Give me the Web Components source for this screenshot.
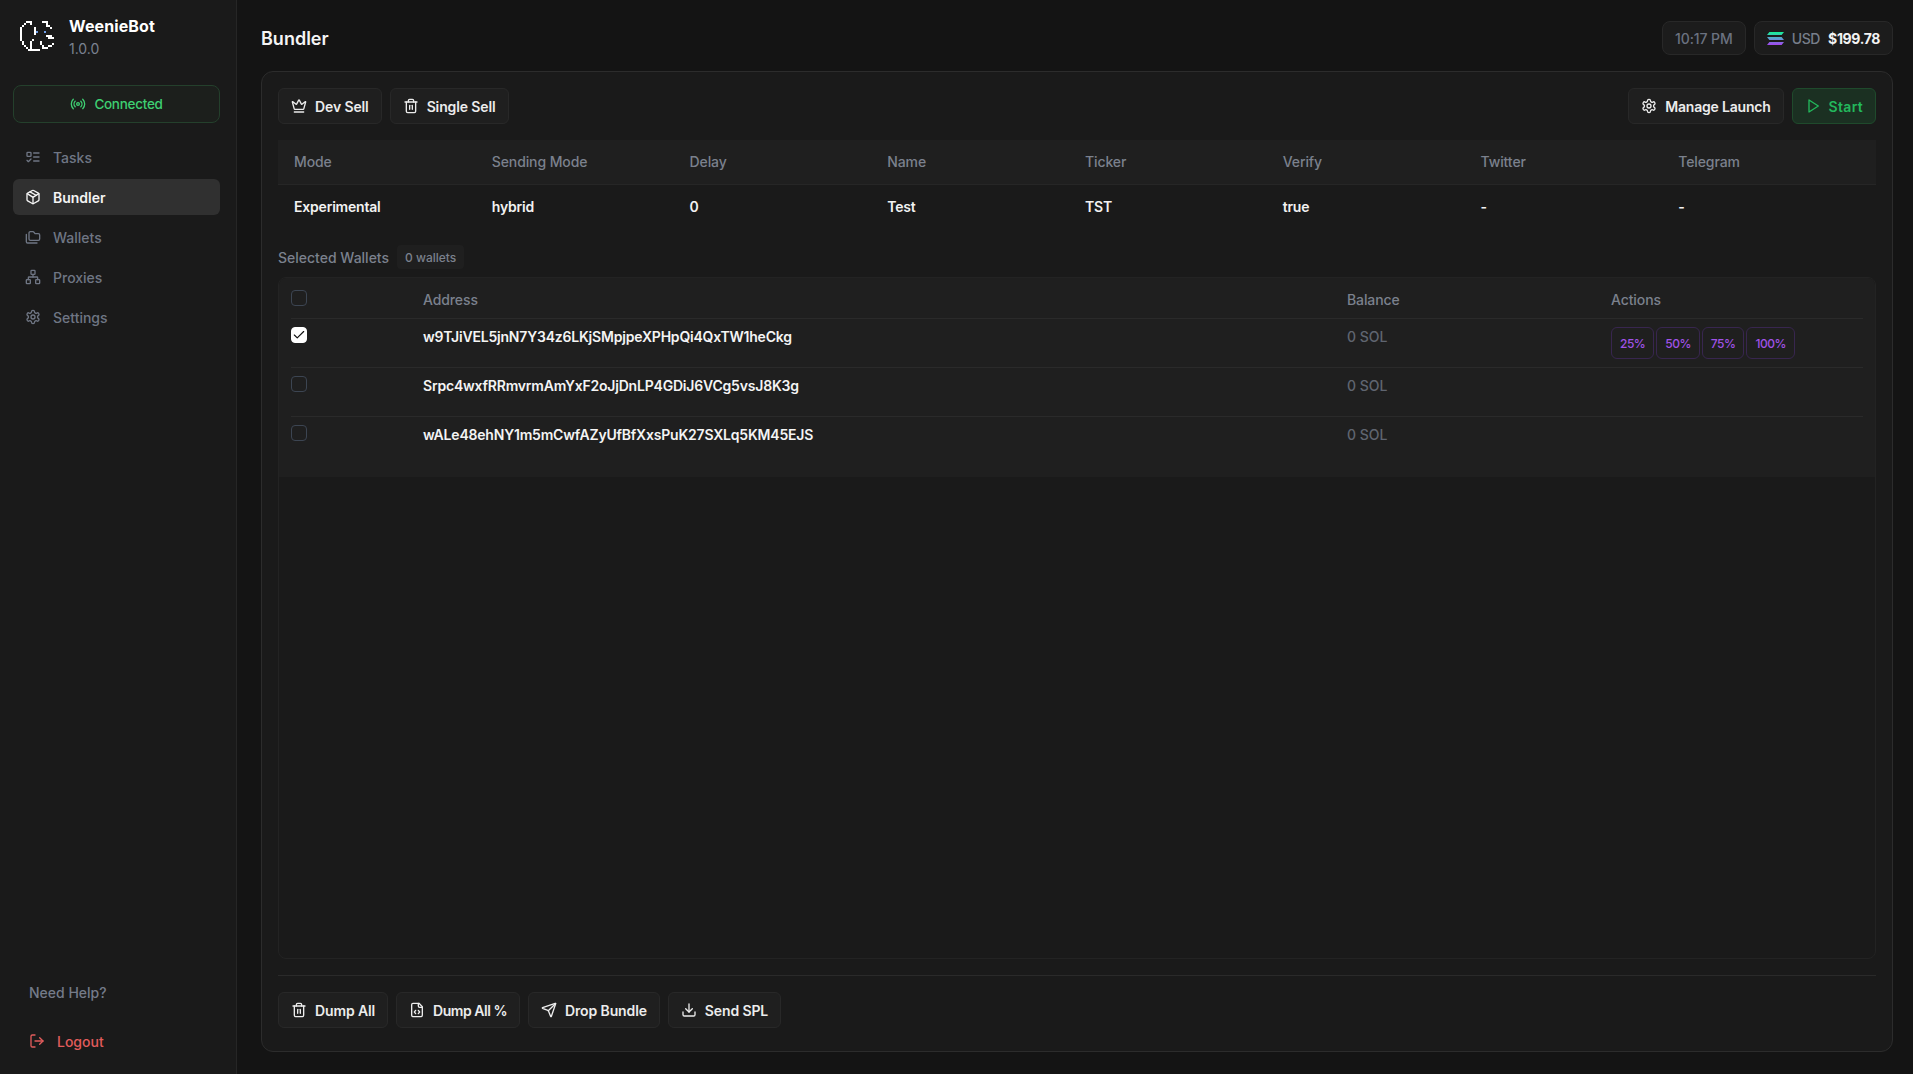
<!DOCTYPE html>
<html lang="en"><head><meta charset="utf-8"><title>WeenieBot</title>
<style>
html,body{margin:0;height:100%;background:#141414;}
body{font-family:Inter,"Noto Sans",sans-serif;font-size:14px;color:#f2f2f2;overflow:hidden}
</style></head><body>
<wb-app></wb-app>
<script>
const ICONS={
tasks:'<rect x="3" y="5" width="6" height="6" rx="1"/><path d="m3 17 2 2 4-4"/><path d="M13 6h8"/><path d="M13 12h8"/><path d="M13 18h8"/>',
box:'<path d="M11 21.73a2 2 0 0 0 2 0l7-4A2 2 0 0 0 21 16V8a2 2 0 0 0-1-1.73l-7-4a2 2 0 0 0-2 0l-7 4A2 2 0 0 0 3 8v8a2 2 0 0 0 1 1.73z"/><path d="M12 22V12"/><path d="m3.3 7 7.703 4.734a2 2 0 0 0 1.994 0L20.7 7"/><path d="m7.5 4.27 9 5.15"/>',
folders:'<path d="M20 17a2 2 0 0 0 2-2V9a2 2 0 0 0-2-2h-3.9a2 2 0 0 1-1.69-.9l-.81-1.2a2 2 0 0 0-1.67-.9H8a2 2 0 0 0-2 2v9a2 2 0 0 0 2 2Z"/><path d="M2 8v11a2 2 0 0 0 2 2h14"/>',
network:'<rect x="16" y="16" width="6" height="6" rx="1"/><rect x="2" y="16" width="6" height="6" rx="1"/><rect x="9" y="2" width="6" height="6" rx="1"/><path d="M5 16v-3a1 1 0 0 1 1-1h12a1 1 0 0 1 1 1v3"/><path d="M12 12V8"/>',
gear:'<path d="M12.22 2h-.44a2 2 0 0 0-2 2v.18a2 2 0 0 1-1 1.73l-.43.25a2 2 0 0 1-2 0l-.15-.08a2 2 0 0 0-2.73.73l-.22.38a2 2 0 0 0 .73 2.73l.15.1a2 2 0 0 1 1 1.72v.51a2 2 0 0 1-1 1.74l-.15.09a2 2 0 0 0-.73 2.73l.22.38a2 2 0 0 0 2.73.73l.15-.08a2 2 0 0 1 2 0l.43.25a2 2 0 0 1 1 1.73V20a2 2 0 0 0 2 2h.44a2 2 0 0 0 2-2v-.18a2 2 0 0 1 1-1.73l.43-.25a2 2 0 0 1 2 0l.15.08a2 2 0 0 0 2.73-.73l.22-.39a2 2 0 0 0-.73-2.73l-.15-.08a2 2 0 0 1-1-1.74v-.5a2 2 0 0 1 1-1.74l.15-.09a2 2 0 0 0 .73-2.73l-.22-.38a2 2 0 0 0-2.73-.73l-.15.08a2 2 0 0 1-2 0l-.43-.25a2 2 0 0 1-1-1.73V4a2 2 0 0 0-2-2z"/><circle cx="12" cy="12" r="3"/>',
radio:'<path d="M4.9 19.1C1 15.2 1 8.8 4.9 4.9"/><path d="M7.8 16.2c-2.3-2.3-2.3-6.1 0-8.5"/><circle cx="12" cy="12" r="2"/><path d="M16.2 7.8c2.3 2.3 2.3 6.1 0 8.5"/><path d="M19.1 4.9C23 8.8 23 15.1 19.1 19"/>',
crown:'<path d="M11.562 3.266a.5.5 0 0 1 .876 0L15.39 8.87a1 1 0 0 0 1.516.294L21.183 5.5a.5.5 0 0 1 .798.519l-2.834 10.246a1 1 0 0 1-.956.734H5.81a1 1 0 0 1-.957-.734L2.02 6.02a.5.5 0 0 1 .798-.519l4.276 3.664a1 1 0 0 0 1.516-.294z"/><path d="M5 21h14"/>',
trash:'<path d="M3 6h18"/><path d="M19 6v14c0 1-1 2-2 2H7c-1 0-2-1-2-2V6"/><path d="M8 6V4c0-1 1-2 2-2h4c1 0 2 1 2 2v2"/><line x1="10" x2="10" y1="11" y2="17"/><line x1="14" x2="14" y1="11" y2="17"/>',
filecode:'<path d="M10 12.5 8 15l2 2.5"/><path d="m14 12.5 2 2.5-2 2.5"/><path d="M14 2v4a2 2 0 0 0 2 2h4"/><path d="M15 2H6a2 2 0 0 0-2 2v16a2 2 0 0 0 2 2h12a2 2 0 0 0 2-2V7z"/>',
send:'<path d="M14.536 21.686a.5.5 0 0 0 .937-.024l6.5-19a.496.496 0 0 0-.635-.635l-19 6.5a.5.5 0 0 0-.024.937l7.93 3.18a2 2 0 0 1 1.112 1.11z"/><path d="m21.854 2.147-10.94 10.939"/>',
download:'<path d="M12 3v12"/><path d="m7 10 5 5 5-5"/><path d="M21 15v4a2 2 0 0 1-2 2H5a2 2 0 0 1-2-2v-4"/>',
logout:'<path d="M9 21H5a2 2 0 0 1-2-2V5a2 2 0 0 1 2-2h4"/><polyline points="16 17 21 12 16 7"/><line x1="21" x2="9" y1="12" y2="12"/>',
play:'<polygon points="6 3 20 12 6 21 6 3"/>'
};
class Base extends HTMLElement{
  constructor(){super();this.attachShadow({mode:'open'});}
  connectedCallback(){this.shadowRoot.innerHTML=this.render();}
  a(n,d=''){const v=this.getAttribute(n);return v===null?d:v;}
}
class WbIcon extends Base{render(){const s=this.a('size','16');return `<style>:host{display:inline-flex;flex:none;width:${s}px;height:${s}px}svg{display:block}</style><svg xmlns="http://www.w3.org/2000/svg" width="${s}" height="${s}" viewBox="0 0 24 24" fill="none" stroke="currentColor" stroke-width="${this.a('sw','2')}" stroke-linecap="round" stroke-linejoin="round">${ICONS[this.a('name')]}</svg>`;}}
customElements.define('wb-icon',WbIcon);

class WbLogo extends Base{render(){
  const rows=[
  "....###.....###...",
  "...#..#.......#...",
  "..#...........##..",
  ".#......#.......#.",
  ".#......#.........",
  ".#......#B...B....",
  ".#......#.........",
  ".#............###.",
  ".#.............###",
  ".#.....#..........",
  "..#...#....#......",
  "..#...#....#.....#",
  "...#..#.....#..##.",
  "....#.#.....###...",
  ".....######.......",
  ];
  let out='';
  rows.forEach((r,y)=>[...r].forEach((c,x)=>{if(c!=='.')out+=`<rect x="${x*2}" y="${y*2}" width="2" height="2" fill="${c==='B'?'#6f9fe8':'#fff'}"/>`;}));
  return `<style>:host{display:block;width:36px;height:30px;flex:none;margin-top:1px}svg{display:block}</style><svg xmlns="http://www.w3.org/2000/svg" width="36" height="30" viewBox="0 0 36 30" shape-rendering="crispEdges">${out}</svg>`;
}}
customElements.define('wb-logo',WbLogo);

class WbNavItem extends Base{render(){const on=this.hasAttribute('active');return `<style>
:host{display:flex;align-items:center;gap:12px;height:36px;padding:0 12px;border-radius:6px;font-size:14px;font-weight:${on?600:500};color:${on?'#f4f4f4':'#6f7684'};background:${on?'#303030':'transparent'}}
</style><wb-icon name="${this.a('icon')}"></wb-icon><slot></slot>`;}}
customElements.define('wb-nav-item',WbNavItem);

class WbSidebar extends Base{render(){return `<style>
:host{display:flex;flex-direction:column;flex:none;box-sizing:border-box;width:237px;height:100%;background:#1a1a1a;border-right:1px solid #262626;padding:20px 16px 16px 13px}
.brand{display:flex;gap:15px;padding-left:5px;height:32px;margin-bottom:33px}
.name{font-size:16px;font-weight:700;color:#fff;line-height:20px;margin-top:-4px;letter-spacing:.1px}
.ver{font-size:14px;color:#7b8290;line-height:20px;margin-top:3px}
.conn{display:flex;align-items:center;justify-content:center;gap:8px;height:38px;box-sizing:border-box;border:1px solid #24402c;border-radius:8px;color:#3ecf72;font-size:13.5px;letter-spacing:-.28px;font-weight:500;margin-bottom:16px;background:#1c1f1c}
nav{display:flex;flex-direction:column;gap:4px}
.foot{margin-top:auto;padding-left:16px;display:flex;flex-direction:column}
.help{color:#747b89;font-weight:500;font-size:14px;line-height:20px;margin-bottom:28px}
.logout{display:flex;align-items:center;gap:12px;color:#e25c5c;font-weight:500;font-size:14px;height:20px;margin-bottom:7px}
</style>
<div class="brand"><wb-logo></wb-logo><div><div class="name">WeenieBot</div><div class="ver">1.0.0</div></div></div>
<div class="conn"><wb-icon name="radio"></wb-icon>Connected</div>
<nav><wb-nav-item icon="tasks">Tasks</wb-nav-item><wb-nav-item icon="box" active>Bundler</wb-nav-item><wb-nav-item icon="folders">Wallets</wb-nav-item><wb-nav-item icon="network">Proxies</wb-nav-item><wb-nav-item icon="gear">Settings</wb-nav-item></nav>
<div class="foot"><div class="help">Need Help?</div><div class="logout"><wb-icon name="logout"></wb-icon>Logout</div></div>`;}}
customElements.define('wb-sidebar',WbSidebar);

class WbButton extends Base{render(){const g=this.a('tone')==='green';return `<style>
:host{display:inline-flex;align-items:center;gap:8px;box-sizing:border-box;height:36px;padding:0 12px;border-radius:6px;font-size:14px;font-weight:600;letter-spacing:var(--ls,-.12px);border:1px solid ${g?'#1f4a2c':'#282828'};background:${g?'#1b3022':'#1f1f1f'};color:${g?'#23b85c':'#ececec'}}
</style>${this.a('icon')?`<wb-icon name="${this.a('icon')}"></wb-icon>`:''}<slot></slot>`;}}
customElements.define('wb-button',WbButton);

class WbPct extends Base{render(){return `<style>
:host{display:inline-flex;align-items:center;justify-content:center;box-sizing:border-box;height:32px;padding:0 8px;border:1px solid #38264f;border-radius:6px;color:#a052e6;font-size:12px;letter-spacing:-.5px;font-weight:500}
</style><slot></slot>`;}}
customElements.define('wb-pct',WbPct);

class WbDetails extends Base{render(){
  const cols=JSON.parse(this.a('cols'));
  const g=a=>a.map(v=>`<span>${v}</span>`).join('');
  return `<style>
:host{display:block}
.r{display:grid;grid-template-columns:repeat(8,1fr);align-items:center;padding-right:16px}
.r span{padding-left:16px}
.h{height:45px;box-sizing:border-box;padding-bottom:1px;background:#1f1f1f;border-bottom:1px solid #262626;color:#7b818d;font-weight:500;font-size:14px;letter-spacing:-.1px}
.b{height:44px;box-sizing:border-box;padding-bottom:1px;color:#f2f2f2;font-weight:600;font-size:14px;letter-spacing:-.2px}
</style><div class="r h">${g(cols.map(c=>c[0]))}</div><div class="r b">${g(cols.map(c=>c[1]))}</div>`;
}}
customElements.define('wb-details',WbDetails);

class WbCheck extends Base{render(){const on=this.hasAttribute('checked');return `<style>
:host{display:block;box-sizing:border-box;width:16px;height:16px;border-radius:4px;border:1px solid ${on?'#fff':'#3c4552'};background:${on?'#fff':'transparent'}}
svg{display:block}
</style>${on?'<svg xmlns="http://www.w3.org/2000/svg" width="14" height="14" viewBox="0 0 24 24" fill="none" stroke="#111" stroke-width="2" stroke-linecap="round" stroke-linejoin="round"><path d="M20 6 9 17l-5-5"/></svg>':''}`;}}
customElements.define('wb-check',WbCheck);

class WbWalletRow extends Base{render(){return `<style>
:host{display:grid;grid-template-columns:132px 924px 264px 1fr;box-sizing:border-box;height:49px;padding-top:8px;border-bottom:1px solid var(--line,#2a2a2a)}
.a{font-weight:600;color:#f4f4f4;font-size:14px;letter-spacing:-.2px;line-height:20px;white-space:nowrap}
.b{color:#5f6570;font-size:14px;line-height:20px;font-weight:500}
.p{display:flex;gap:2px}
</style><div><wb-check ${this.hasAttribute('checked')?'checked':''}></wb-check></div><div class="a">${this.a('address')}</div><div class="b">${this.a('balance')}</div><div class="p"><slot></slot></div>`;}}
customElements.define('wb-wallet-row',WbWalletRow);

class WbWalletTable extends Base{render(){return `<style>
:host{display:block;flex:1;min-height:0;box-sizing:border-box;border:1px solid #232323;border-radius:8px;background:#1a1a1a;overflow:hidden}
.in{background:#1f1f1f;padding:0 12px 11px}
.head{display:grid;grid-template-columns:132px 924px 264px 1fr;height:41px;box-sizing:border-box;padding-top:12px;border-bottom:1px solid #2a2a2a;color:#7b818d;font-weight:500;font-size:14px;line-height:20px;letter-spacing:-.1px}
::slotted(:last-child){border-bottom:0 !important}
</style><div class="in"><div class="head"><div><wb-check></wb-check></div><div>Address</div><div>Balance</div><div>Actions</div></div><slot></slot></div>`;}}
customElements.define('wb-wallet-table',WbWalletTable);

class WbPanel extends Base{render(){return `<style>
:host{display:flex;flex-direction:column;flex:1;min-height:0;box-sizing:border-box;background:#1a1a1a;border:1px solid #2c2c2c;border-radius:12px;padding:16px 16px 23px}
.top{display:flex;justify-content:space-between;margin-bottom:16px}
.grp{display:flex;gap:8px}
.sel{display:flex;align-items:center;gap:8px;margin:16px 0 8px;height:24px;color:#7b818d;font-weight:500;font-size:14px}
.tag{display:inline-flex;align-items:center;height:24px;padding:0 8px;background:#1f1f1f;border-radius:4px;font-size:12px;color:#7b818d}
.bottom{margin-top:16px;border-top:1px solid #2a2a2a;padding-top:16px}
</style>
<div class="top"><div class="grp"><wb-button icon="crown">Dev Sell</wb-button><wb-button icon="trash">Single Sell</wb-button></div><div class="grp"><wb-button icon="gear" style="--ls:-.2px">Manage Launch</wb-button><wb-button icon="play" tone="green" style="--ls:.3px">Start</wb-button></div></div>
<wb-details cols='[["Mode","Experimental"],["Sending Mode","hybrid"],["Delay","0"],["Name","Test"],["Ticker","TST"],["Verify","true"],["Twitter","-"],["Telegram","-"]]'></wb-details>
<div class="sel">Selected Wallets <span class="tag">0 wallets</span></div>
<wb-wallet-table>
<wb-wallet-row checked address="w9TJiVEL5jnN7Y34z6LKjSMpjpeXPHpQi4QxTW1heCkg" balance="0 SOL"><wb-pct>25%</wb-pct><wb-pct>50%</wb-pct><wb-pct>75%</wb-pct><wb-pct>100%</wb-pct></wb-wallet-row>
<wb-wallet-row address="Srpc4wxfRRmvrmAmYxF2oJjDnLP4GDiJ6VCg5vsJ8K3g" balance="0 SOL"></wb-wallet-row>
<wb-wallet-row address="wALe48ehNY1m5mCwfAZyUfBfXxsPuK27SXLq5KM45EJS" balance="0 SOL"></wb-wallet-row>
</wb-wallet-table>
<div class="bottom grp"><wb-button icon="trash">Dump All</wb-button><wb-button icon="filecode" style="--ls:-.48px">Dump All %</wb-button><wb-button icon="send">Drop Bundle</wb-button><wb-button icon="download">Send SPL</wb-button></div>`;}}
customElements.define('wb-panel',WbPanel);

class WbHeader extends Base{render(){return `<style>
:host{display:flex;align-items:center;justify-content:space-between;height:34px;margin-bottom:16px;flex:none}
h1{margin:0;font-size:18px;font-weight:600;color:#f4f4f4}
.r{display:flex;gap:8px}
.b{display:flex;align-items:center;gap:8px;height:34px;box-sizing:border-box;padding:0 12px;border:1px solid #282828;border-radius:8px;background:#1c1c1c;font-size:14px}
.t{color:#6b7280;font-weight:500;letter-spacing:-.1px}
.u{color:#777e8a;font-weight:500;letter-spacing:-.35px}
.v{color:#f2f2f2;font-weight:700;letter-spacing:-.35px}
</style><h1>Bundler</h1><div class="r"><div class="b"><span class="t">10:17 PM</span></div><div class="b"><svg xmlns="http://www.w3.org/2000/svg" width="17" height="13" viewBox="0 0 17 13"><defs><linearGradient id="s" x1="0" y1="0" x2="0" y2="1"><stop offset="0" stop-color="#14f195"/><stop offset=".5" stop-color="#5d9fd0"/><stop offset="1" stop-color="#a544f0"/></linearGradient></defs><path fill="url(#s)" d="M2.4 0H17l-2.4 3H0zM0 5h14.6L17 8H2.4zM2.4 10H17l-2.4 3H0z"/></svg><span class="u">USD</span><span class="v">$199.78</span></div></div>`;}}
customElements.define('wb-header',WbHeader);

class WbApp extends Base{render(){return `<style>
:host{display:flex;width:100%;height:100vh}
main{flex:1;min-width:0;display:flex;flex-direction:column;box-sizing:border-box;padding:21px 20px 22px 24px;background:#141414}
</style><wb-sidebar></wb-sidebar><main><wb-header></wb-header><wb-panel></wb-panel></main>`;}}
customElements.define('wb-app',WbApp);
</script>
</body></html>
